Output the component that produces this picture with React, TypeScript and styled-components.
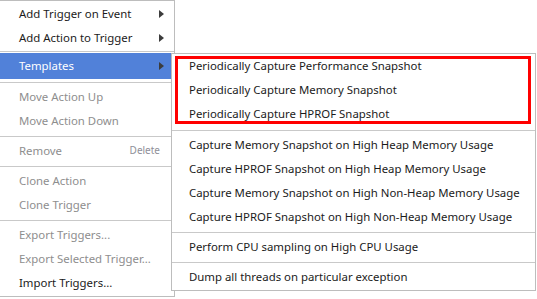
import styled, { createGlobalStyle } from 'styled-components';

const GlobalStyle = createGlobalStyle`
  html, body {
    margin: 0;
    padding: 0;
    background: #ffffff;
  }
  body {
    font-family: 'Noto Sans', 'Liberation Sans', sans-serif;
    font-size: 11.4px;
  }
`;

type Entry =
  | { kind: 'item'; label: string; disabled?: boolean; arrow?: boolean; active?: boolean; shortcut?: string }
  | { kind: 'sep'; compact?: boolean };

const mainItems: Entry[] = [
  { kind: 'item', label: 'Add Trigger on Event', arrow: true },
  { kind: 'item', label: 'Add Action to Trigger', arrow: true },
  { kind: 'sep', compact: true },
  { kind: 'item', label: 'Templates', arrow: true, active: true },
  { kind: 'sep' },
  { kind: 'item', label: 'Move Action Up', disabled: true },
  { kind: 'item', label: 'Move Action Down', disabled: true },
  { kind: 'sep' },
  { kind: 'item', label: 'Remove', disabled: true, shortcut: 'Delete' },
  { kind: 'sep' },
  { kind: 'item', label: 'Clone Action', disabled: true },
  { kind: 'item', label: 'Clone Trigger', disabled: true },
  { kind: 'sep' },
  { kind: 'item', label: 'Export Triggers...', disabled: true },
  { kind: 'item', label: 'Export Selected Trigger...', disabled: true },
  { kind: 'item', label: 'Import Triggers...' },
];

const templateGroups: string[][] = [
  [
    'Periodically Capture Performance Snapshot',
    'Periodically Capture Memory Snapshot',
    'Periodically Capture HPROF Snapshot',
  ],
  [
    'Capture Memory Snapshot on High Heap Memory Usage',
    'Capture HPROF Snapshot on High Heap Memory Usage',
    'Capture Memory Snapshot on High Non-Heap Memory Usage',
    'Capture HPROF Snapshot on High Non-Heap Memory Usage',
  ],
  ['Perform CPU sampling on High CPU Usage'],
  ['Dump all threads on particular exception'],
];

const Arrow = () => (
  <ArrowIcon width="5" height="8" viewBox="0 0 5 8">
    <path d="M0 0 L5 4 L0 8 Z" fill="#3c3c3c" />
  </ArrowIcon>
);

const App = () => {
  return (
    <>
      <GlobalStyle />
      <Stage>
        <MainMenu>
          {mainItems.map((entry, i) =>
            entry.kind === 'sep' ? (
              <Separator key={i} $compact={entry.compact} />
            ) : (
              <Item key={i} $disabled={entry.disabled} $active={entry.active}>
                <Label>{entry.label}</Label>
                {entry.shortcut && <Shortcut>{entry.shortcut}</Shortcut>}
                {entry.arrow && <Arrow />}
              </Item>
            )
          )}
        </MainMenu>

        <SubMenu>
          {templateGroups.map((group, gi) => (
            <Group key={gi}>
              {gi > 0 && <Separator />}
              {group.map(label => (
                <SubItem key={label} $first={gi === 0}>
                  {label}
                </SubItem>
              ))}
            </Group>
          ))}
          <Highlight />
        </SubMenu>
      </Stage>
    </>
  );
};

export default App;

const Stage = styled.div`
  position: relative;
  width: 537px;
  height: 299px;
  overflow: hidden;
`;

const MainMenu = styled.div`
  display: flex;
  flex-direction: column;
  width: 176px;
  margin-left: -1px;
  padding: 1px 0 1px;
  box-sizing: border-box;
  border: 1px solid #bdbdbd;
  background: #ffffff;
`;

const Item = styled.div<{ $disabled?: boolean; $active?: boolean }>`
  display: flex;
  align-items: center;
  box-sizing: border-box;
  height: ${p => (p.$active ? 26 : 24)}px;
  padding: 0 10px 2px 19px;
  color: ${p => (p.$active ? '#ffffff' : p.$disabled ? '#8e8e8e' : '#1b1b1b')};
  background: ${p => (p.$active ? '#5181d9' : 'transparent')};
  white-space: nowrap;
`;

const Label = styled.span`
  flex: 1;
`;

const Shortcut = styled.span`
  font-size: 10px;
  color: #8f8f99;
  margin-right: 4px;
`;

const ArrowIcon = styled.svg`
  display: block;
  flex: 0 0 auto;
  margin-left: 6px;
  margin-top: 2px;
`;

const Separator = styled.div<{ $compact?: boolean }>`
  height: 1px;
  background: #c9c9c9;
  margin: ${p => (p.$compact ? '1px 0 1px' : '3px 0 2px')};
`;

const SubMenu = styled.div`
  position: absolute;
  left: 171px;
  top: 53px;
  width: 365px;
  box-sizing: border-box;
  padding: 1px 0;
  border: 1px solid #bdbdbd;
  background: #ffffff;
`;

const Group = styled.div`
  display: flex;
  flex-direction: column;
`;

const SubItem = styled.div<{ $first?: boolean }>`
  display: flex;
  align-items: center;
  box-sizing: border-box;
  height: 24px;
  padding: 0 0 ${p => (p.$first ? 4 : 2)}px 17px;
  color: #1b1b1b;
  white-space: nowrap;
`;

const Highlight = styled.div`
  position: absolute;
  left: 3px;
  top: 2px;
  width: 356px;
  height: 68px;
  box-sizing: border-box;
  border: 3px solid #ff0000;
  pointer-events: none;
`;
